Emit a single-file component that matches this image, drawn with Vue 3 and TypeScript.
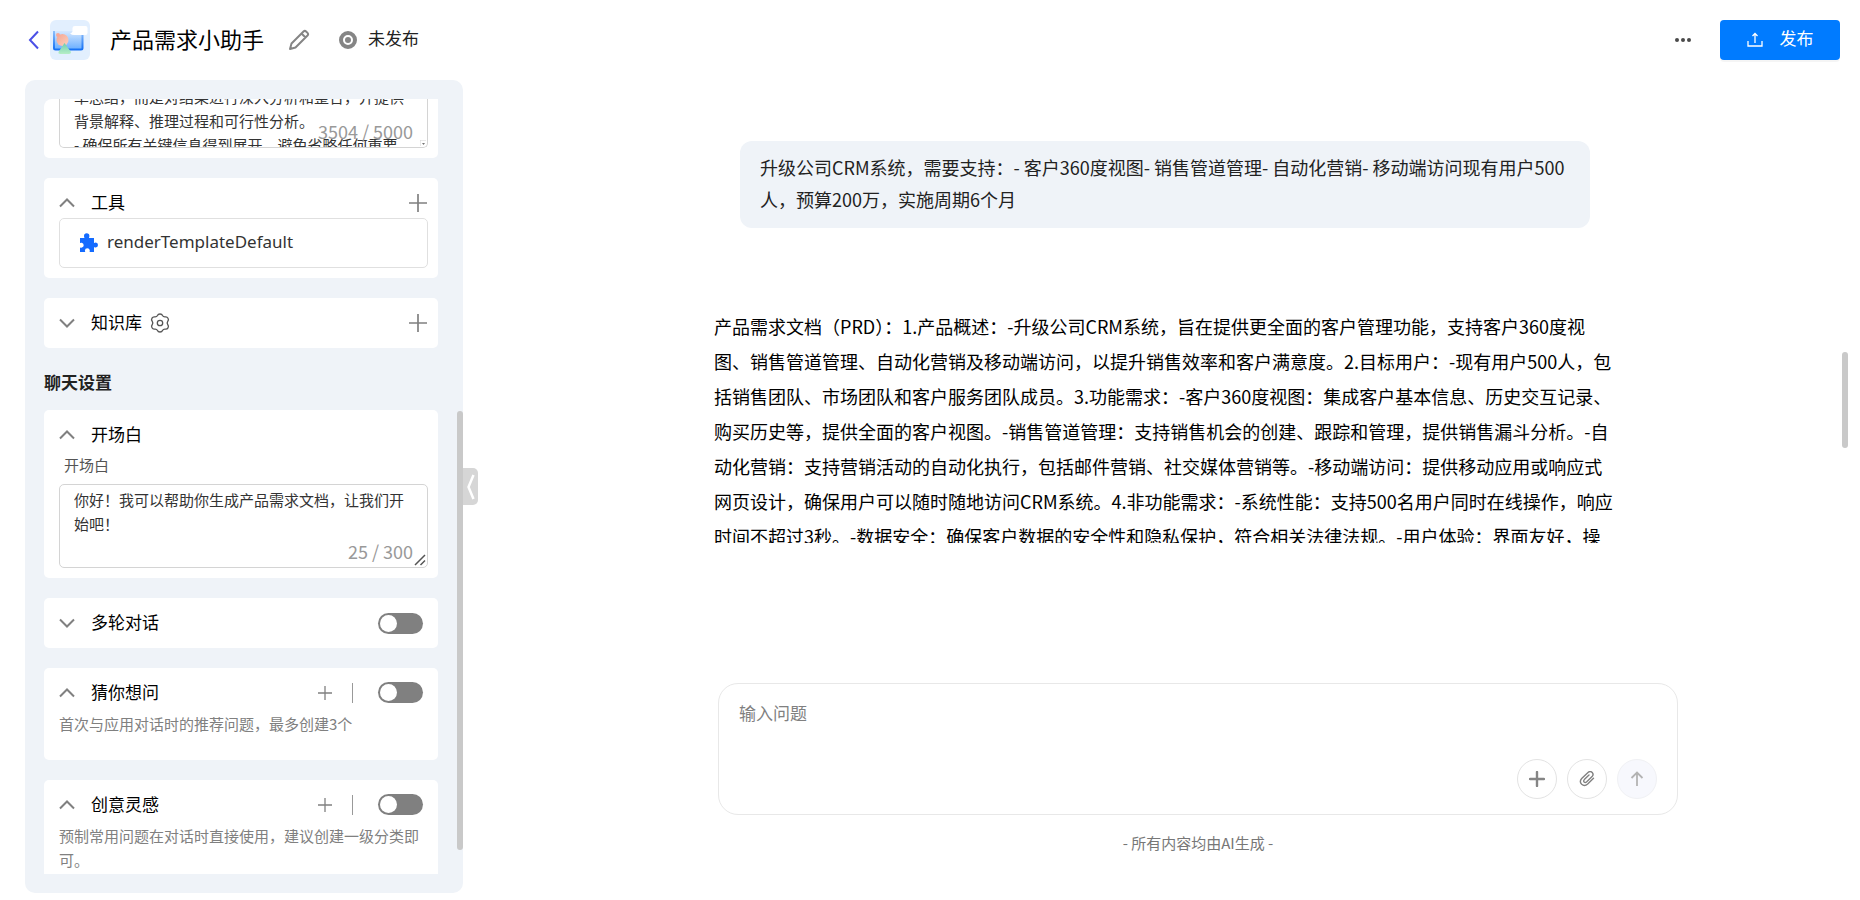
<script setup lang="ts">
import { onMounted, ref } from 'vue'

const promptText = ref(
  '单总结，而是对结果进行深入分析和整合，并提供\n背景解释、推理过程和可行性分析。\n- 确保所有关键信息得到展开，避免省略任何重要'
)
const opening = ref('你好！我可以帮助你生成产品需求文档，让我们开始吧！')
const question = ref('')
const multiTurn = ref(false)
const guess = ref(false)
const inspiration = ref(false)
const promptBox = ref<HTMLTextAreaElement | null>(null)

const userLines: string[] = [
  '升级公司CRM系统，需要支持：- 客户360度视图- 销售管道管理- 自动化营销- 移动端访问现有用户500',
  '人，预算200万，实施周期6个月',
]

const answerLines: string[] = [
  '产品需求文档（PRD）：1.产品概述：-升级公司CRM系统，旨在提供更全面的客户管理功能，支持客户360度视',
  '图、销售管道管理、自动化营销及移动端访问，以提升销售效率和客户满意度。2.目标用户：-现有用户500人，包',
  '括销售团队、市场团队和客户服务团队成员。3.功能需求：-客户360度视图：集成客户基本信息、历史交互记录、',
  '购买历史等，提供全面的客户视图。-销售管道管理：支持销售机会的创建、跟踪和管理，提供销售漏斗分析。-自',
  '动化营销：支持营销活动的自动化执行，包括邮件营销、社交媒体营销等。-移动端访问：提供移动应用或响应式',
  '网页设计，确保用户可以随时随地访问CRM系统。4.非功能需求：-系统性能：支持500名用户同时在线操作，响应',
  '时间不超过3秒。-数据安全：确保客户数据的安全性和隐私保护，符合相关法律法规。-用户体验：界面友好，操',
]

onMounted(() => {
  if (promptBox.value) promptBox.value.scrollTop = 14
})
</script>

<template>
  <div class="page">
    <header class="topbar">
      <button class="plain back" aria-label="返回">
        <svg width="12" height="20" viewBox="0 0 12 20"><path d="M10 1.500 2 10l8 8.500" fill="none" stroke="#4b50e6" stroke-width="2" /></svg>
      </button>
      <svg class="avatar" width="40" height="40" viewBox="0 0 40 40">
        <defs>
          <linearGradient id="screen" x1="0" y1="0" x2="0" y2="1"><stop offset="0" stop-color="#d6e8fe" /><stop offset="1" stop-color="#6cb0ff" /></linearGradient>
          <linearGradient id="edge" x1="0" y1="0" x2="0" y2="1"><stop offset="0" stop-color="#8fc0fb" /><stop offset="1" stop-color="#1672f5" /></linearGradient>
          <linearGradient id="cone" x1="0" y1="0" x2="0" y2="1"><stop offset="0" stop-color="#6cccb0" /><stop offset="1" stop-color="#b6eec6" /></linearGradient>
          <linearGradient id="ball" x1="0" y1="0" x2="1" y2="1"><stop offset="0" stop-color="#f5a592" /><stop offset="1" stop-color="#fbd0bd" /></linearGradient>
        </defs>
        <rect width="40" height="40" rx="6" fill="#e2effe" />
        <path d="M5 11h27v18H5z" fill="url(#screen)" />
        <path d="M4 11v17q0 1.500 1.500 1.500h25.500q1.500 0 1.500-1.500V14" fill="none" stroke="url(#edge)" stroke-width="2" />
        <circle cx="12.500" cy="20" r="6" fill="url(#ball)" /><circle cx="8" cy="15" r="2" fill="#f7a898" />
        <path d="M14.500 23 21 32q0 2-2 2h-9q-2 0-1.500-2z" fill="url(#cone)" />
        <path d="M25 6h10.500q2 0 2 2v5q0 2-2 2H24q-2 0-4-1.500 2-.5 2.500-2V8q0-2 2.500-2z" fill="#fff" />
      </svg>
      <h1>产品需求小助手</h1>
      <button class="plain edit" aria-label="编辑">
        <svg width="22" height="22" viewBox="0 0 22 22" fill="none" stroke="#858585" stroke-width="2" stroke-linejoin="round"><path d="m2 20 1.500-5.500L15.500 2.500q1.300-1.200 2.600 0l1.400 1.400q1.200 1.300 0 2.600L7.500 18.500zM13.500 4.500l4 4" /></svg>
      </button>
      <svg class="dot" width="18" height="18" viewBox="0 0 18 18"><circle cx="9" cy="9" r="7" fill="#fff" stroke="#858585" stroke-width="4" /><circle cx="9" cy="9" r="3" fill="#858585" /></svg>
      <span class="status">未发布</span>
      <button class="plain more" aria-label="更多">
        <svg width="18" height="6" viewBox="0 0 18 6" fill="#4a4a4a"><circle cx="3" cy="3" r="2" /><circle cx="9" cy="3" r="2" /><circle cx="15" cy="3" r="2" /></svg>
      </button>
      <button class="publish">
        <svg width="16" height="16" viewBox="0 0 16 16" fill="none" stroke="#fff" stroke-width="1.300"><path d="M1 9v5h14V9M8 11V2M5.500 4 8 1.500 10.500 4" /></svg>
        <span>发布</span>
      </button>
    </header>

    <div class="body">
      <aside class="panel">
        <div class="scroll">
          <section class="card prompt">
            <div class="field cut">
              <textarea ref="promptBox" v-model="promptText" aria-label="提示词"></textarea>
              <span class="count">3504 / 5000</span>
              <svg class="grip" width="6" height="6" viewBox="0 0 6 6"><path d="M0 6V0h6" fill="none" stroke="#d4d4d4" /><path d="M2 3h3L3.500 5z" fill="#777" /></svg>
            </div>
          </section>

          <section class="card tools">
            <div class="head">
              <button class="plain fold" aria-label="收起"><svg width="16" height="10" viewBox="0 0 16 10"><path d="m1 8.500 7-7 7 7" fill="none" stroke="#808080" stroke-width="2" /></svg></button>
              <h2>工具</h2>
              <button class="plain add" aria-label="添加工具"><svg width="18" height="18" viewBox="0 0 18 18"><path d="M9 0v18M0 9h18" stroke="#808080" stroke-width="1.700" /></svg></button>
            </div>
            <div class="tool">
              <svg width="18" height="20" viewBox="0 0 18 20"><path d="M0 5h4.500q-.5-1-.5-2 0-2.600 2.700-2.700Q9.400.4 9.400 3q0 1-.5 2H14v5q1-.5 1.800-.5Q18 9.700 18 12t-2.200 2.500q-.8 0-1.800-.5v5h-4.500q.4-.8.3-1.600-.2-2-2.500-2.100-2.200.1-2.400 2.100 0 .8.400 1.600H0v-4.600q1 .4 1.900.2 1.800-.4 1.800-2.400T1.900 9.700Q1 9.500 0 10z" fill="#146bff" /></svg>
              <span>renderTemplateDefault</span>
            </div>
          </section>

          <section class="card">
            <div class="head">
              <button class="plain fold" aria-label="展开"><svg width="16" height="10" viewBox="0 0 16 10"><path d="m1 1.500 7 7 7-7" fill="none" stroke="#808080" stroke-width="2" /></svg></button>
              <h2>知识库</h2>
              <button class="plain gear" aria-label="知识库设置">
                <svg width="20" height="20" viewBox="0 0 20 20" fill="none" stroke="#555" stroke-width="1.300" stroke-linejoin="round"><path d="M7.500 2.500Q8 1 10 1t2.500 1.500q.8 1.600 2.800 1.400 1.800-.3 2.700 1.300 1 1.700-.2 3-1.200 1.800 0 3.600 1.200 1.300.2 3-.9 1.600-2.700 1.300-2-.2-2.800 1.400Q12 19 10 19t-2.500-1.500q-.8-1.600-2.800-1.400-1.800.3-2.700-1.300-1-1.700.2-3 1.200-1.800 0-3.600-1.200-1.300-.2-3 .9-1.600 2.700-1.300 2 .2 2.800-1.400z" /><circle cx="10" cy="10" r="2.700" /></svg>
              </button>
              <button class="plain add" aria-label="添加知识库"><svg width="18" height="18" viewBox="0 0 18 18"><path d="M9 0v18M0 9h18" stroke="#808080" stroke-width="1.700" /></svg></button>
            </div>
          </section>

          <h3 class="group">聊天设置</h3>

          <section class="card opening">
            <div class="head">
              <button class="plain fold" aria-label="收起"><svg width="16" height="10" viewBox="0 0 16 10"><path d="m1 8.500 7-7 7 7" fill="none" stroke="#808080" stroke-width="2" /></svg></button>
              <h2>开场白</h2>
            </div>
            <label for="opening">开场白</label>
            <div class="field">
              <textarea id="opening" v-model="opening"></textarea>
              <span class="count">25 / 300</span>
              <svg class="grip" width="12" height="12" viewBox="0 0 12 12"><path d="M1 11 11 1M6.500 11 11 6.500" stroke="#555" stroke-width="1.500" /></svg>
            </div>
          </section>

          <section class="card">
            <div class="head">
              <button class="plain fold" aria-label="展开"><svg width="16" height="10" viewBox="0 0 16 10"><path d="m1 1.500 7 7 7-7" fill="none" stroke="#808080" stroke-width="2" /></svg></button>
              <h2>多轮对话</h2>
              <input v-model="multiTurn" class="switch" type="checkbox" aria-label="多轮对话" />
            </div>
          </section>

          <section class="card described">
            <div class="head">
              <button class="plain fold" aria-label="收起"><svg width="16" height="10" viewBox="0 0 16 10"><path d="m1 8.500 7-7 7 7" fill="none" stroke="#808080" stroke-width="2" /></svg></button>
              <h2>猜你想问</h2>
              <button class="plain small-add" aria-label="添加问题"><svg width="14" height="14" viewBox="0 0 14 14"><path d="M7 0v14M0 7h14" stroke="#808080" stroke-width="1.300" /></svg></button>
              <input v-model="guess" class="switch" type="checkbox" aria-label="猜你想问" />
            </div>
            <p>首次与应用对话时的推荐问题，最多创建3个</p>
          </section>

          <section class="card described">
            <div class="head">
              <button class="plain fold" aria-label="收起"><svg width="16" height="10" viewBox="0 0 16 10"><path d="m1 8.500 7-7 7 7" fill="none" stroke="#808080" stroke-width="2" /></svg></button>
              <h2>创意灵感</h2>
              <button class="plain small-add" aria-label="添加灵感"><svg width="14" height="14" viewBox="0 0 14 14"><path d="M7 0v14M0 7h14" stroke="#808080" stroke-width="1.300" /></svg></button>
              <input v-model="inspiration" class="switch" type="checkbox" aria-label="创意灵感" />
            </div>
            <p>预制常用问题在对话时直接使用，建议创建一级分类即可。</p>
          </section>
        </div>
        <div class="thumb"></div>
        <button class="collapse" aria-label="收起面板"><svg width="8" height="26" viewBox="0 0 8 26"><path d="M6.500 1 1.500 13l5 12" fill="none" stroke="#fff" stroke-width="2.500" /></svg></button>
      </aside>

      <main class="chat">
        <div class="column">
          <div class="bubble">{{ userLines.join('\n') }}</div>
          <div class="answer">{{ answerLines.join('\n') }}</div>
          <div class="composer">
            <textarea v-model="question" placeholder="输入问题" aria-label="输入问题"></textarea>
            <div class="actions">
              <button aria-label="新建"><svg width="16" height="16" viewBox="0 0 16 16"><path d="M8 1v14M1 8h14" stroke="#858585" stroke-width="2.400" stroke-linecap="round" /></svg></button>
              <button aria-label="附件"><svg width="16" height="16" viewBox="0 0 16 16"><path d="M14.500 7.800 8.700 13.500Q5.500 16.200 2.700 13.800 0 11 2.700 8L9 2q2.200-1.800 4.200 0 1.800 2-.1 4.100L7.500 11.500q-1.300 1-2.400 0-.9-1.200.2-2.400L10 4.600" transform="translate(0 -.5)" fill="none" stroke="#808080" stroke-width="1.400" stroke-linecap="round" /></svg></button>
              <button class="send" aria-label="发送" disabled><svg width="14" height="16" viewBox="0 0 14 16"><path d="M7 15V1.500M1.500 7 7 1.500 12.500 7" fill="none" stroke="#b3b3b3" stroke-width="1.800" /></svg></button>
            </div>
          </div>
          <p class="note">- 所有内容均由AI生成 -</p>
        </div>
        <div class="page-thumb"></div>
      </main>
    </div>
  </div>
</template>

<style>
body {
  margin: 0;
  background: #fff;
}
</style>

<style scoped>
* {
  box-sizing: border-box;
}
.page {
  display: flex;
  flex-direction: column;
  height: 100vh;
  overflow: hidden;
  font-family: "Noto Sans CJK SC", sans-serif;
  font-size: 17px;
  color: #222;
}
button,
textarea {
  font: inherit;
}
svg {
  display: block;
  flex: none;
}
h1,
h2,
h3,
p {
  margin: 0;
  font-weight: 400;
}
.plain {
  padding: 0;
  border: 0;
  background: none;
}
.topbar {
  display: flex;
  align-items: center;
  height: 80px;
  flex: none;
  padding: 0 20px 0 28px;
}
.back {
  margin-right: 10px;
}
h1 {
  margin: 0 24px 0 20px;
  font-size: 22px;
  line-height: 36px;
  color: #000;
}
h1,
.status,
.publish span {
  padding-bottom: 5px;
}
.dot {
  margin: 0 11px 0 29px;
}
.status {
  line-height: 36px;
}
.more {
  margin: 0 28px 0 auto;
}
.publish {
  display: flex;
  align-items: center;
  justify-content: center;
  gap: 17px;
  width: 120px;
  height: 40px;
  padding: 0;
  border: 0;
  border-radius: 4px;
  background: #007bff;
  box-shadow: 0 2px 0 rgba(0, 0, 0, 0.04);
  color: #fff;
}
.body {
  display: flex;
  flex: 1;
  min-height: 0;
}
.panel {
  position: relative;
  width: 438px;
  flex: none;
  margin: 0 0 7px 25px;
  padding: 19px 25px 19px 19px;
  border-radius: 10px;
  background: #eff3f8;
}
.scroll {
  height: 100%;
  overflow: hidden;
  border-radius: 8px 0 0 0;
}
.card {
  margin-bottom: 20px;
  padding: 0 10px 0 15px;
  border-radius: 5px;
  background: #fff;
}
.prompt {
  height: 59px;
  border-radius: 0 0 5px 5px;
}
.tools {
  height: 100px;
}
.opening {
  height: 168px;
}
.described {
  padding-bottom: 24px;
}
.head {
  display: flex;
  align-items: center;
  height: 50px;
}
.tools .head {
  height: 40px;
  padding-top: 10px;
}
.described .head {
  height: 44px;
  padding-top: 5px;
}
.fold {
  width: 32px;
}
h2 {
  padding-bottom: 2px;
  font-size: 17px;
  line-height: 28px;
  color: #000;
}
.gear {
  margin-left: 8px;
}
.add {
  margin: 0 1px 0 auto;
}
.small-add {
  display: flex;
  align-items: center;
  margin-left: auto;
  height: 20px;
  padding-right: 20px;
  border-right: 1px solid #999;
}
.switch {
  position: relative;
  appearance: none;
  width: 45px;
  height: 21px;
  margin: 0 5px 0 auto;
  border-radius: 11px;
  background: #808080;
}
.small-add + .switch {
  margin-left: 25px;
}
.switch::before {
  content: "";
  position: absolute;
  top: 2px;
  left: 2px;
  width: 17px;
  height: 17px;
  border-radius: 50%;
  background: #fff;
}
.switch:checked::before {
  left: 26px;
}
.tool {
  display: flex;
  align-items: center;
  gap: 9px;
  height: 50px;
  padding-left: 20px;
  border: 1px solid #e0e0e0;
  border-radius: 5px;
  color: #333;
}
.tool span {
  padding-bottom: 2px;
  font-family: "Noto Sans", sans-serif;
  line-height: 24px;
}
.group {
  margin-bottom: 14px;
  font-size: 17px;
  font-weight: 600;
  line-height: 28px;
}
label {
  display: block;
  height: 24px;
  padding-left: 5px;
  font-size: 15px;
  line-height: 10px;
  color: #555;
}
.field {
  position: relative;
  height: 84px;
  padding: 3px 14px;
  border: 1px solid #d4d4d4;
  border-radius: 5px;
}
.cut {
  height: 49px;
  padding: 0 14px;
  border-top: 0;
  border-radius: 0 0 5px 5px;
}
.field textarea {
  display: block;
  width: 100%;
  height: 48px;
  padding: 0;
  border: 0;
  background: none;
  resize: none;
  overflow: hidden;
  outline: 0;
  font-size: 15px;
  line-height: 24px;
  color: #333;
}
.count {
  position: absolute;
  right: 14px;
  bottom: 4px;
  font-size: 18px;
  line-height: 24px;
  color: #999;
}
.grip {
  position: absolute;
  right: 1px;
  bottom: 1px;
}
.card p {
  font-size: 15px;
  line-height: 24px;
  color: #808080;
}
.thumb {
  position: absolute;
  top: 331px;
  right: 0;
  width: 6px;
  height: 439px;
  border-radius: 3px;
  background: #c9c9c9;
}
.collapse {
  position: absolute;
  top: 388px;
  left: 100%;
  display: flex;
  align-items: center;
  justify-content: center;
  width: 15px;
  height: 37px;
  padding: 0;
  border: 0;
  border-radius: 0 5px 5px 0;
  background: #d6d6d6;
}
.chat {
  position: relative;
  flex: 1;
  min-width: 0;
  padding-left: 73px;
}
.column {
  max-width: 968px;
  margin: 0 auto;
  padding-top: 61px;
}
.bubble {
  margin: 0 92px 0 26px;
  padding: 10px 20px 13px;
  border-radius: 12px;
  background: #eff3f8;
  font-size: 18px;
  line-height: 32px;
  white-space: pre-line;
}
.answer {
  height: 234px;
  margin-top: 81px;
  overflow: hidden;
  font-size: 18px;
  line-height: 35px;
  color: #000;
  white-space: pre-line;
}
.composer {
  margin: 140px 4px 0;
  height: 132px;
  padding: 17px 20px 15px;
  border: 1px solid #e8e8e8;
  border-radius: 20px;
}
.composer textarea {
  display: block;
  width: 100%;
  height: 58px;
  padding: 0;
  border: 0;
  background: none;
  resize: none;
  outline: 0;
  line-height: 24px;
}
.composer textarea::placeholder {
  color: #808080;
}
.actions {
  display: flex;
  justify-content: flex-end;
  gap: 10px;
}
.actions button {
  display: flex;
  align-items: center;
  justify-content: center;
  width: 40px;
  height: 40px;
  padding: 0;
  border: 1px solid #e3e3e3;
  border-radius: 50%;
  background: #fff;
}
.actions .send {
  border-color: #f0f1f4;
  background: #f7f8fd;
}
.note {
  margin-top: 16px;
  text-align: center;
  font-size: 15px;
  line-height: 24px;
  color: #777;
}
.page-thumb {
  position: absolute;
  top: 272px;
  right: 12px;
  width: 6px;
  height: 96px;
  border-radius: 3px;
  background: #c9c9c9;
}
</style>
